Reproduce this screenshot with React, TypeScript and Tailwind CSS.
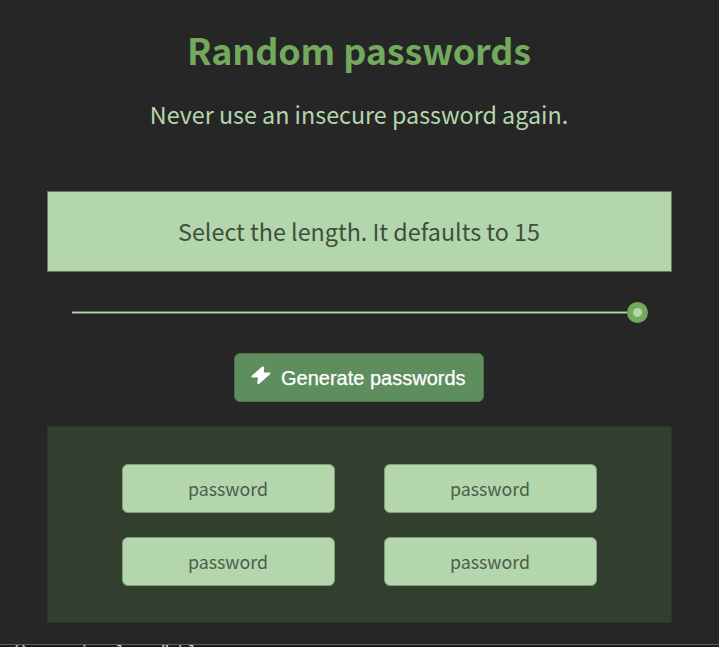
const cjk = "font-['Noto_Sans_CJK_SC',sans-serif]";

function Password() {
  return (
    <div className="flex h-[49px] items-center justify-center rounded-[6px] border border-[#819f7c] bg-[#b4d6ad] pt-px pr-px text-[17.8px] leading-none text-[#4a6049]">
      <span>password</span>
    </div>
  );
}

export default function App() {
  return (
    <div className={`flex h-[647px] w-[719px] flex-col overflow-hidden bg-[#262626] ${cjk}`}>
      <main className="flex h-[644px] shrink-0 flex-col items-center">
        <h1 className="mt-[25px] mr-px h-12 text-[36px] leading-[48px] font-bold tracking-[-0.16px] whitespace-nowrap text-[#73a95c]">Random passwords</h1>
        <p className="mt-[25px] mr-px h-8 text-[23.3px] leading-8 whitespace-nowrap text-[#b4d6ad]">Never use an insecure password again.</p>
        <div className="mt-[61px] flex h-[81px] w-[625px] items-center justify-center border border-[#64775f] bg-[#b4d6ad] pr-px pb-px text-[23.3px] leading-8 text-[#3c503c]">
          Select the length. It defaults to 15
        </div>
        <div className="mt-[30px] flex h-[21px] w-[575px] items-center">
          <div className="h-[3px] grow border-y border-[#5f725b] bg-[#b4d6ad]" />
          <div className="-mr-px flex size-[21px] items-center justify-center rounded-full bg-[#73a95c]">
            <div className="size-[9px] rounded-full bg-[#b4d6ad]" />
          </div>
        </div>
        <button className="mt-[30px] mr-px flex h-[49px] w-[250px] items-center rounded-[6px] border border-[#4b744b] bg-[#5e8e5e] pl-[16px] font-['Liberation_Sans',Arial,sans-serif] text-[20px] text-white">
          <svg className="-mt-[4px] h-[19px] w-5" viewBox="0 0 20 19" fill="currentColor">
            <path d="M11 .7 L.8 9.8 Q0 11.5 1.2 11.5 H7 L6.3 17.2 Q6.6 18.6 8.3 17.8 L19.3 8.1 Q19.8 6.6 18.6 6.5 H12.8 L13.2 1.6 Q12.8 0 11 .7Z" />
          </svg>
          <span className="ml-[10px] whitespace-nowrap [-webkit-text-stroke:0.25px_white]">Generate passwords</span>
        </button>
        <section className="mt-6 grid h-[197px] w-[625px] grid-cols-2 content-start gap-x-[49px] gap-y-6 border border-[#2c342b] bg-[#323f2f] px-[74px] pt-[37px]">
          <Password />
          <Password />
          <Password />
          <Password />
        </section>
      </main>
      <footer className="flex h-[3px] shrink-0 overflow-hidden border-t border-[#625c60] bg-[#1c1c1c] pl-[11px] font-['Liberation_Mono',monospace] text-[17px] leading-4 text-[#cccccc]">
        <span className="w-[68px] tracking-[-2px]">()</span>
        <span className="w-9">i</span>
        <span className="w-[45px]">l</span>
        <span className="w-[18px] tracking-[-2px]">"</span>
        <span className="w-[9px]">\</span>
        <span>l</span>
      </footer>
    </div>
  );
}
